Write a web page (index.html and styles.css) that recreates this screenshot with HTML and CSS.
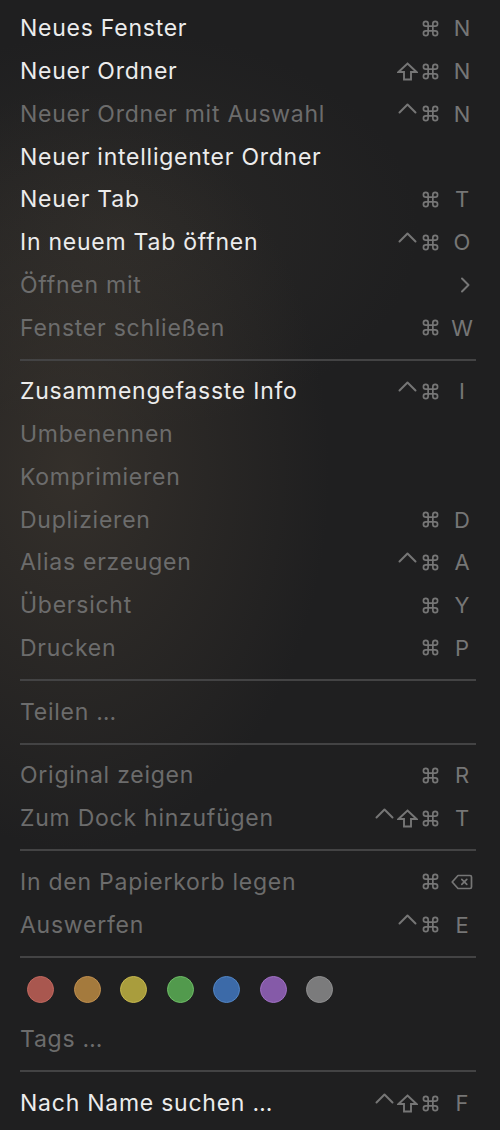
FILE: index.html
```html
<!DOCTYPE html>
<html lang="de">
<head>
<meta charset="utf-8">
<title>Ablage</title>
<link rel="stylesheet" href="styles.css">
</head>
<body>
<svg class="defs" width="0" height="0" aria-hidden="true">
  <defs>
    <symbol id="cmd" viewBox="-1 -1 18 18"><path d="M5.5 3A2.5 2.5 0 1 0 3 5.5H13A2.5 2.5 0 1 0 10.5 3V13A2.5 2.5 0 1 0 13 10.5H3A2.5 2.5 0 1 0 5.5 13Z"/></symbol>
    <symbol id="shift" viewBox="0 0 21 19"><path d="M10.5 1.5L19.5 10H14V17.5H7V10H1.5Z"/></symbol>
    <symbol id="ctrl" viewBox="0 0 19 19"><path d="M1.5 10.5L9.5 2.5L17.5 10.5"/></symbol>
    <symbol id="del" viewBox="0 0 22 16"><path d="M7 1.5H19A1.5 1.5 0 0 1 20.5 3V13A1.5 1.5 0 0 1 19 14.5H7L1.2 8Z"/><path d="M10.8 5.3L15.8 10.3M15.8 5.3L10.8 10.3"/></symbol>
    <symbol id="chev" viewBox="0 0 12 16"><path d="M3 1.5L9.5 8L3 14.5"/></symbol>
  </defs>
</svg>
<div class="menu">
  <div class="item"><span class="label">Neues Fenster</span><span class="sc"><span class="mod"><svg class="i-cmd"><use href="#cmd"/></svg></span><span class="key">N</span></span></div>
  <div class="item"><span class="label">Neuer Ordner</span><span class="sc"><span class="mod"><svg class="i-shift"><use href="#shift"/></svg></span><span class="mod"><svg class="i-cmd"><use href="#cmd"/></svg></span><span class="key">N</span></span></div>
  <div class="item off"><span class="label">Neuer Ordner mit Auswahl</span><span class="sc"><span class="mod"><svg class="i-ctrl"><use href="#ctrl"/></svg></span><span class="mod"><svg class="i-cmd"><use href="#cmd"/></svg></span><span class="key">N</span></span></div>
  <div class="item"><span class="label">Neuer intelligenter Ordner</span></div>
  <div class="item"><span class="label">Neuer Tab</span><span class="sc"><span class="mod"><svg class="i-cmd"><use href="#cmd"/></svg></span><span class="key">T</span></span></div>
  <div class="item"><span class="label">In neuem Tab öffnen</span><span class="sc"><span class="mod"><svg class="i-ctrl"><use href="#ctrl"/></svg></span><span class="mod"><svg class="i-cmd"><use href="#cmd"/></svg></span><span class="key">O</span></span></div>
  <div class="item off"><span class="label">Öffnen mit</span><span class="sc"><span class="key"><svg class="chev"><use href="#chev"/></svg></span></span></div>
  <div class="item off"><span class="label">Fenster schließen</span><span class="sc"><span class="mod"><svg class="i-cmd"><use href="#cmd"/></svg></span><span class="key">W</span></span></div>
  <div class="sep"></div>
  <div class="item"><span class="label">Zusammengefasste Info</span><span class="sc"><span class="mod"><svg class="i-ctrl"><use href="#ctrl"/></svg></span><span class="mod"><svg class="i-cmd"><use href="#cmd"/></svg></span><span class="key">I</span></span></div>
  <div class="item off"><span class="label">Umbenennen</span></div>
  <div class="item off"><span class="label">Komprimieren</span></div>
  <div class="item off"><span class="label">Duplizieren</span><span class="sc"><span class="mod"><svg class="i-cmd"><use href="#cmd"/></svg></span><span class="key">D</span></span></div>
  <div class="item off"><span class="label">Alias erzeugen</span><span class="sc"><span class="mod"><svg class="i-ctrl"><use href="#ctrl"/></svg></span><span class="mod"><svg class="i-cmd"><use href="#cmd"/></svg></span><span class="key">A</span></span></div>
  <div class="item off"><span class="label">Übersicht</span><span class="sc"><span class="mod"><svg class="i-cmd"><use href="#cmd"/></svg></span><span class="key">Y</span></span></div>
  <div class="item off"><span class="label">Drucken</span><span class="sc"><span class="mod"><svg class="i-cmd"><use href="#cmd"/></svg></span><span class="key">P</span></span></div>
  <div class="sep"></div>
  <div class="item off"><span class="label">Teilen …</span></div>
  <div class="sep"></div>
  <div class="item off"><span class="label">Original zeigen</span><span class="sc"><span class="mod"><svg class="i-cmd"><use href="#cmd"/></svg></span><span class="key">R</span></span></div>
  <div class="item off"><span class="label">Zum Dock hinzufügen</span><span class="sc"><span class="mod"><svg class="i-ctrl"><use href="#ctrl"/></svg></span><span class="mod"><svg class="i-shift"><use href="#shift"/></svg></span><span class="mod"><svg class="i-cmd"><use href="#cmd"/></svg></span><span class="key">T</span></span></div>
  <div class="sep"></div>
  <div class="item off"><span class="label">In den Papierkorb legen</span><span class="sc"><span class="mod"><svg class="i-cmd"><use href="#cmd"/></svg></span><span class="key"><svg class="del"><use href="#del"/></svg></span></span></div>
  <div class="item off"><span class="label">Auswerfen</span><span class="sc"><span class="mod"><svg class="i-ctrl"><use href="#ctrl"/></svg></span><span class="mod"><svg class="i-cmd"><use href="#cmd"/></svg></span><span class="key">E</span></span></div>
  <div class="sep"></div>
  <div class="tags">
    <span class="dot red"></span>
    <span class="dot orange"></span>
    <span class="dot yellow"></span>
    <span class="dot green"></span>
    <span class="dot blue"></span>
    <span class="dot purple"></span>
    <span class="dot gray"></span>
  </div>
  <div class="item off"><span class="label">Tags …</span></div>
  <div class="sep"></div>
  <div class="item"><span class="label">Nach Name suchen …</span><span class="sc"><span class="mod"><svg class="i-ctrl"><use href="#ctrl"/></svg></span><span class="mod"><svg class="i-shift"><use href="#shift"/></svg></span><span class="mod"><svg class="i-cmd"><use href="#cmd"/></svg></span><span class="key">F</span></span></div>
</div>
</body>
</html>
```
FILE: styles.css
```css
html, body {
  margin: 0;
  padding: 0;
}
body {
  width: 500px;
  height: 1130px;
  overflow: hidden;
  background-color: #1f1f20;
  background-image:
    radial-gradient(ellipse 260px 380px at 70px 470px, rgba(78, 68, 56, 0.45), rgba(78, 68, 56, 0) 100%),
    radial-gradient(ellipse 300px 200px at 120px 230px, rgba(60, 56, 50, 0.35), rgba(60, 56, 50, 0) 100%);
  font-family: "Inter", "Liberation Sans", sans-serif;
}
.defs {
  position: absolute;
  width: 0;
  height: 0;
}
.menu {
  padding-top: 7px;
  display: flex;
  flex-direction: column;
}
.item {
  height: 42.75px;
  display: flex;
  align-items: center;
  padding: 0 18px 0 20px;
  font-size: 23px;
  letter-spacing: 0.75px;
  color: #ececec;
}
.item.off {
  color: #6c6c6c;
}
.label {
  flex: 1;
  white-space: nowrap;
}
.sc {
  display: flex;
  align-items: center;
  color: #767676;
}
.mod {
  width: 23px;
  height: 24px;
  display: flex;
  align-items: center;
  justify-content: center;
}
.mod svg {
  fill: none;
  stroke: #767676;
  stroke-width: 1.8;
  stroke-linejoin: round;
  stroke-linecap: round;
}
.mod .i-cmd {
  width: 17px;
  height: 17px;
}
.mod .i-shift {
  width: 21px;
  height: 19px;
  stroke-width: 1.9;
  stroke-linejoin: miter;
}
.mod .i-ctrl {
  width: 19px;
  height: 19px;
  margin-top: -4px;
  stroke-width: 2;
}
.key {
  width: 40px;
  height: 24px;
  display: flex;
  align-items: center;
  justify-content: center;
  font-size: 22px;
  letter-spacing: 0;
}
.key svg {
  fill: none;
  stroke: #767676;
  stroke-width: 1.8;
  stroke-linejoin: round;
  stroke-linecap: round;
}
.key .chev {
  width: 12px;
  height: 16px;
  stroke-width: 2;
  margin-left: 6px;
}
.key .del {
  width: 22px;
  height: 16px;
  stroke-width: 1.7;
}
.sep {
  height: 21px;
  display: flex;
  align-items: center;
  padding: 0 24px 0 20px;
}
.sep::before {
  content: "";
  flex: 1;
  height: 2px;
  background: #434344;
}
.tags {
  height: 51px;
  display: flex;
  align-items: flex-start;
  padding: 9px 0 0 27px;
  box-sizing: border-box;
  gap: 19.5px;
}
.dot {
  width: 27px;
  height: 27px;
  border-radius: 50%;
  border: 1.5px solid;
  box-sizing: border-box;
}
.red { background: #a9574f; border-color: #c1685f; }
.orange { background: #a47a3d; border-color: #c08f4f; }
.yellow { background: #a99d3d; border-color: #c6b84e; }
.green { background: #529a4d; border-color: #6ebd67; }
.blue { background: #3c6aa8; border-color: #5285c4; }
.purple { background: #855aa8; border-color: #a070c4; }
.gray { background: #7b7b7c; border-color: #8f8f90; }
```
